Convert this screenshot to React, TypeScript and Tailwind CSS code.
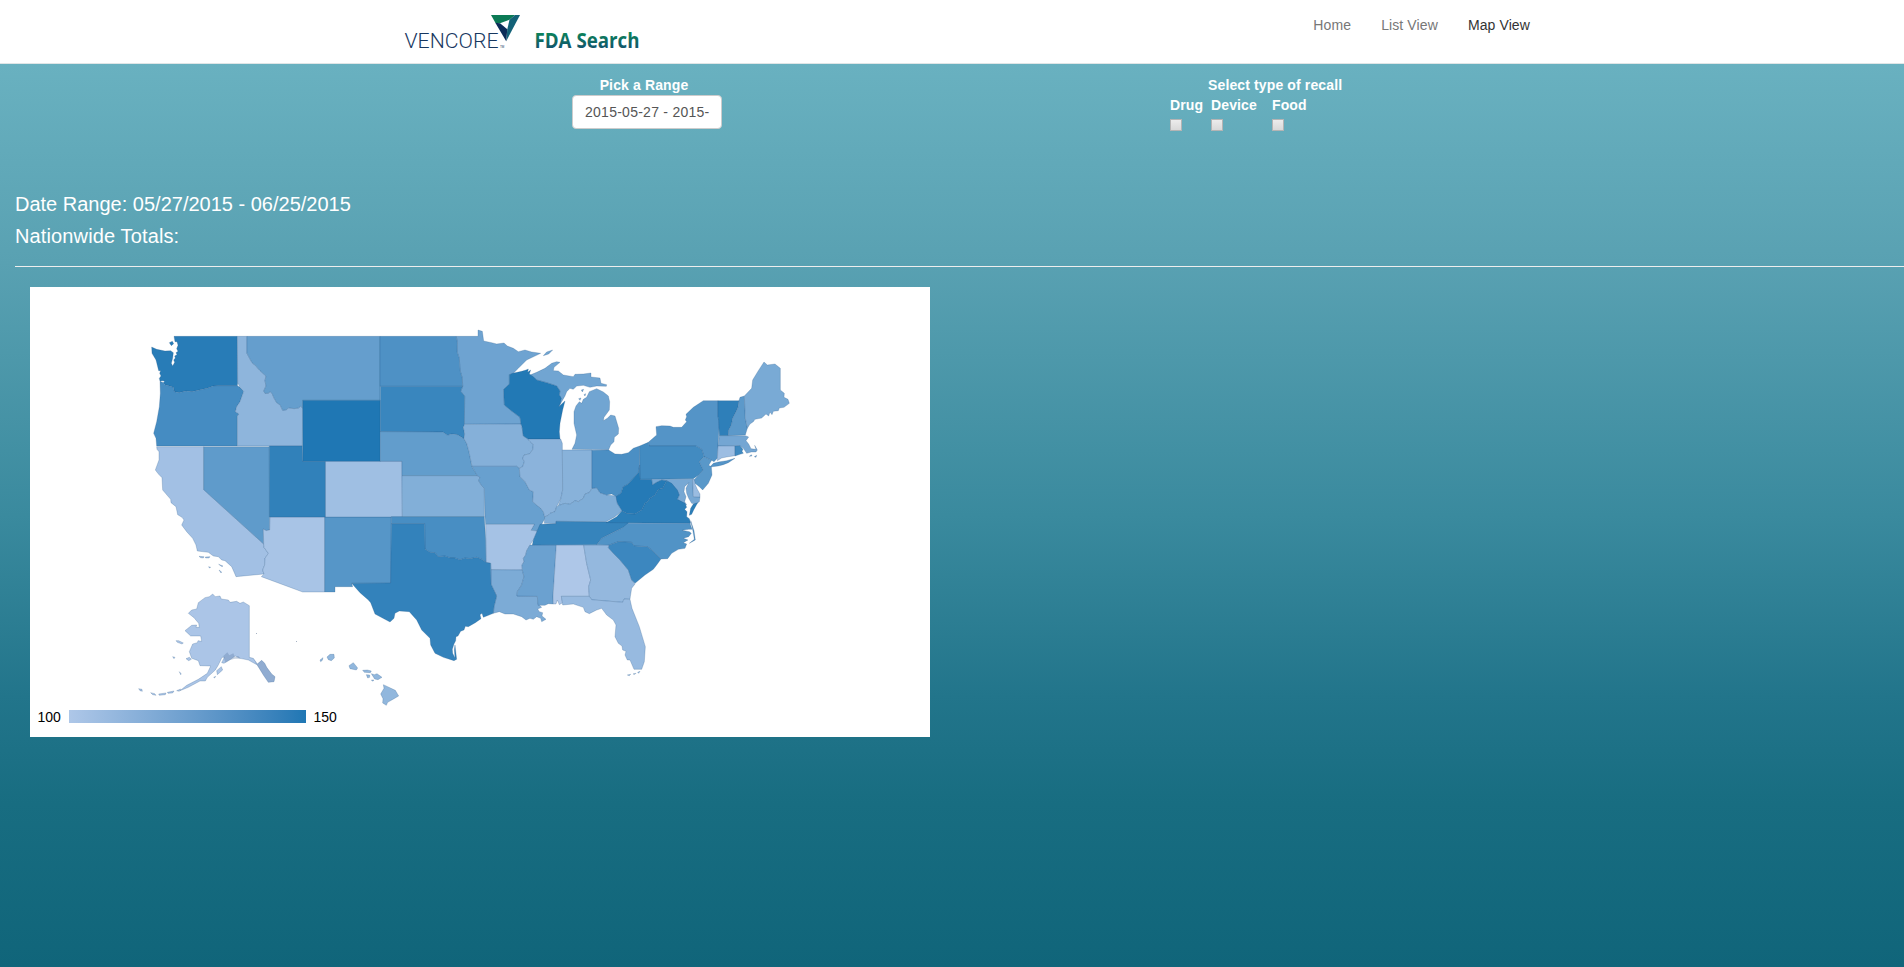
import React from 'react';

type Shape = { name: string; rank: number; d: string };

const LOW = [174, 199, 232];
const HIGH = [31, 119, 180];

function shade(rank: number): string {
  const t = rank / 49;
  const c = LOW.map((v, i) => Math.round(v + (HIGH[i] - v) * t));
  return `rgb(${c[0]},${c[1]},${c[2]})`;
}

const west: Shape[] = [
  { name: 'Washington', rank: 46, d: 'M132,79 322,79 323,218 322,227 265,227 250,228 232,235 208,240 186,245 168,243 148,248 133,245 130,232 118,228 105,224 100,218 104,213 96,212 90,214 88,205 93,198 89,190 92,182 86,182 78,150 66,130 65,111 80,118 105,123 122,122 130,128 128,145 124,160 128,168 134,157 131,150 136,144 134,138 141,134 138,128 144,124 140,116 144,106 141,95 135,95Z M118,98 127,94 131,101 124,107Z' },
  { name: 'Oregon', rank: 36, d: 'M90,214 100,218 105,224 118,228 130,232 133,245 148,248 168,243 186,245 208,240 232,235 250,228 265,227 322,227 330,232 341,244 330,275 320,290 316,305 327,312 322,318 322,408 80,408 78,385 71,370 80,335 88,290 91,250Z' },
  { name: 'Idaho', rank: 11, d: 'M322,79 351,79 351,130 366,158 376,166 390,182 408,198 405,212 408,228 401,243 405,250 414,250 421,245 427,252 432,264 440,278 450,284 458,301 470,299 476,293 492,296 505,294 512,289 518,294 517,408 322,408 322,318 327,312 316,305 320,290 330,275 341,244 330,232 323,218Z' },
  { name: 'Montana', rank: 25, d: 'M351,79 750,79 750,271 518,271 518,294 512,289 505,294 492,296 476,293 470,299 458,301 450,284 440,278 432,264 427,252 421,245 414,250 405,250 401,243 408,228 405,212 408,198 390,182 376,166 366,158 351,130Z' },
  { name: 'California', rank: 4, d: 'M80,410 221,410 221,539 401,702 402,712 415,730 405,745 404,765 398,780 402,792 318,800 313,788 305,770 285,752 275,750 265,740 250,738 235,727 202,723 198,705 188,685 170,665 155,645 162,630 156,622 143,614 138,590 123,578 122,568 98,540 96,503 86,493 76,480 87,450 87,425 81,418Z M207,739 222,740 220,744 212,743Z M226,741 240,740 237,744 227,744Z M236,770 242,772 238,774Z M266,763 279,768 276,770Z M267,780 275,786 273,789Z' },
  { name: 'Nevada', rank: 27, d: 'M221,410 418,410 419,660 408,662 400,657 401,702 221,539Z' },
  { name: 'Arizona', rank: 2, d: 'M420,621 584,621 584,846 518,846 394,800 402,792 398,780 404,765 405,745 415,730 402,712 401,702 400,657 408,662 419,660Z' },
  { name: 'New Mexico', rank: 30, d: 'M584,621 784,621 783,820 665,820 668,830 615,830 615,846 584,846Z' },
  { name: 'Colorado', rank: 5, d: 'M586,454 816,454 817,621 586,621Z' },
  { name: 'Utah', rank: 43, d: 'M418,408 517,408 518,454 586,454 586,621 418,621Z' },
  { name: 'Wyoming', rank: 49, d: 'M518,271 751,271 751,454 518,454Z' },
];

const central: Shape[] = [
  { name: 'Minnesota', rank: 22, d: 'M259,79 324,79 324,60 337,64 341,93 365,98 380,102 402,99 412,108 430,115 445,125 465,120 485,126 512,130 470,150 445,175 428,192 418,194 418,222 401,238 403,285 425,303 450,322 453,342 283,343 284,258 272,244 278,229 277,205 270,180 268,145 261,125 262,100Z' },
  { name: 'North Dakota', rank: 33, d: 'M30,79 259,79 262,100 261,125 268,145 270,180 277,205 278,229 30,229Z' },
  { name: 'South Dakota', rank: 40, d: 'M31,229 278,229 272,244 284,258 283,345 280,352 284,372 282,386 262,374 245,372 232,376 218,366 31,365Z' },
  { name: 'Nebraska', rank: 26, d: 'M31,365 218,366 232,376 245,372 262,374 282,386 290,400 297,425 302,450 306,470 315,485 322,497 96,497 96,454 31,454Z' },
  { name: 'Kansas', rank: 15, d: 'M96,497 322,497 330,502 326,512 335,527 343,535 343,620 97,620Z' },
  { name: 'Iowa', rank: 14, d: 'M283,343 453,342 458,360 460,378 474,387 480,395 490,403 488,420 478,432 462,435 458,445 463,455 458,470 448,475 440,469 306,469 302,450 297,425 290,400 282,386 284,372 280,352Z' },
  { name: 'Missouri', rank: 24, d: 'M306,469 440,469 448,475 450,500 465,515 478,540 490,545 488,575 512,595 520,605 525,625 517,640 510,650 502,663 483,661 493,643 347,643 345,620 343,535 335,527 326,512 330,502 322,497 315,485Z' },
  { name: 'Arkansas', rank: 3, d: 'M347,643 493,643 483,661 502,663 490,690 480,705 470,722 467,735 460,745 462,755 456,765 457,780 363,779 362,760 348,757Z' },
  { name: 'Louisiana', rank: 17, d: 'M363,779 457,780 462,800 455,825 442,845 441,858 502,859 504,882 515,892 503,897 508,905 518,908 516,918 528,928 515,935 512,925 500,920 490,928 480,925 468,930 455,920 430,912 405,912 388,905 370,910 372,890 380,858 363,822Z' },
  { name: 'Oklahoma', rank: 35, d: 'M64,620 343,620 347,690 348,757 335,748 320,742 300,746 285,744 270,750 255,744 240,744 225,738 205,740 195,728 180,727 165,717 164,641 64,641Z' },
  { name: 'Texas', rank: 42, d: 'M64,641 164,641 165,717 180,727 195,728 205,740 225,738 240,744 255,744 270,750 285,744 300,746 320,742 335,748 348,757 362,760 363,822 380,858 372,890 370,910 350,918 340,922 336,910 330,914 333,926 316,938 295,950 286,949 282,960 272,964 264,978 258,980 257,992 252,1002 247,1018 248,1030 255,1044 253,1020 255,1005 260,1048 252,1052 220,1042 195,1030 182,1005 180,985 155,960 140,930 118,905 88,903 75,910 72,925 60,936 15,912 2,878 -5,870 -30,848 -55,820 62,819Z' },
  { name: 'Mississippi', rank: 23, d: 'M487,705 559,705 549,860 550,882 535,881 525,886 504,886 502,859 441,858 442,845 455,825 462,800 457,780 456,765 462,755 460,745 467,735 470,722 480,705Z' },
  { name: 'Alabama', rank: 0, d: 'M559,705 641,705 650,760 662,810 656,830 658,859 574,859 578,878 568,884 562,870 558,882 550,882 549,860Z' },
  { name: 'Georgia', rank: 9, d: 'M641,705 718,705 715,713 730,730 750,750 775,780 785,810 795,822 785,835 781,860 780,868 762,867 758,877 665,870 658,859 656,830 662,810 650,760Z' },
  { name: 'Florida', rank: 8, d: 'M574,859 658,859 665,869 758,877 762,867 780,868 786,895 808,950 826,1010 823,1055 815,1078 792,1078 780,1050 772,1050 765,1035 768,1024 758,1020 756,1008 745,1000 735,980 738,945 730,930 710,915 695,895 680,900 658,911 645,905 640,892 610,882 578,885Z M772,1095 782,1093 778,1097Z M789,1092 798,1090 795,1093Z M803,1087 810,1084 806,1090Z' },
  { name: 'Michigan', rank: 21, d: 'M478,196 500,187 525,175 545,160 560,155 570,157 552,172 550,182 565,183 580,195 610,200 615,193 640,192 663,189 663,201 690,204 693,220 710,224 709,229 680,228 660,232 640,226 620,228 610,238 600,235 590,245 585,258 568,287 572,265 568,255 570,243 560,228 530,218 500,210Z M606,418 615,400 620,375 612,340 612,305 618,288 628,275 635,280 640,268 650,262 658,245 680,236 700,246 715,258 719,275 718,300 702,322 700,332 712,325 722,315 735,318 746,355 745,372 733,382 732,395 722,405 716,419Z M520,137 530,126 548,120 536,132Z M634,240 641,238 637,246Z M626,266 633,264 630,271Z M642,254 647,251 645,258Z' },
  { name: 'Wisconsin', rank: 48, d: 'M418,194 428,190 455,184 468,180 475,177 473,187 482,180 478,192 490,200 500,210 530,218 560,228 570,243 568,255 574,265 570,283 566,290 585,273 578,300 570,340 568,365 570,387 474,387 460,378 456,350 453,342 450,322 425,303 403,285 401,238 418,222Z' },
  { name: 'Illinois', rank: 12, d: 'M474,387 572,387 577,400 578,540 573,565 560,590 555,605 540,610 532,618 524,620 520,605 512,595 488,575 490,545 478,540 465,515 450,500 448,475 458,470 463,455 458,445 462,435 478,432 488,420 490,403 480,395Z' },
  { name: 'Indiana', rank: 13, d: 'M577,420 666,420 666,535 658,548 645,552 640,565 625,575 615,572 600,583 585,580 565,587 573,565 578,540Z' },
  { name: 'Kentucky', rank: 16, d: 'M523,640 524,620 532,618 540,610 555,605 560,590 565,587 585,580 600,583 615,572 625,575 640,565 645,552 658,548 666,535 680,533 690,548 710,555 740,558 742,580 756,602 735,620 708,635 558,634 558,641Z' },
  { name: 'Tennessee', rank: 41, d: 'M510,643 558,641 558,634 775,637 773,644 755,655 720,672 695,685 680,704 487,705 490,690Z' },
];

const east: Shape[] = [
  { name: 'Ohio', rank: 34, d: 'M96,391 146,390 165,402 185,403 205,398 220,385 239,378 239,435 235,458 215,480 205,492 190,500 183,520 170,530 155,522 140,525 120,518 110,503 96,505Z' },
  { name: 'New York', rank: 31, d: 'M265,367 290,345 288,320 305,317 330,318 340,322 365,322 380,305 376,300 380,290 378,283 400,262 430,242 474,242 474,290 478,300 476,347 474,378 472,415 462,425 455,421 432,410 425,388 408,378 267,378Z M450,441 460,430 475,426 500,422 525,415 505,428 490,434 475,438Z' },
  { name: 'Pennsylvania', rank: 37, d: 'M239,378 265,367 267,378 408,378 425,388 432,410 418,425 425,440 430,450 415,466 400,476 240,478Z' },
  { name: 'New Jersey', rank: 29, d: 'M432,410 455,421 446,436 454,440 456,465 445,490 428,510 418,500 405,490 402,480 415,466 430,450 425,440 418,425Z' },
  { name: 'Vermont', rank: 44, d: 'M474,242 537,242 534,262 528,275 518,295 514,315 506,330 505,347 478,347 476,300 474,290Z' },
  { name: 'New Hampshire', rank: 28, d: 'M537,242 540,232 553,228 556,295 562,325 556,345 505,347 506,330 514,315 518,295 528,275 534,262Z' },
  { name: 'Maine', rank: 18, d: 'M553,228 575,205 578,180 595,152 612,126 622,135 645,132 661,145 661,210 673,220 672,232 684,238 688,250 672,262 658,264 655,272 640,274 636,284 630,276 626,288 618,282 605,294 585,298 580,305 570,312 562,325 556,295Z' },
  { name: 'Massachusetts', rank: 20, d: 'M478,347 556,347 566,351 558,362 566,372 573,386 588,388 584,376 592,390 588,396 574,396 560,400 550,385 540,377 474,378Z M568,409 574,404 576,408Z M583,410 590,406 588,412Z' },
  { name: 'Connecticut', rank: 6, d: 'M474,378 525,378 525,407 500,411 485,414 472,422Z' },
  { name: 'Rhode Island', rank: 38, d: 'M525,378 540,377 549,388 546,394 550,400 540,403 525,408Z' },
  { name: 'Maryland', rank: 19, d: 'M275,478 398,478 400,530 420,531 418,545 408,552 395,550 386,535 380,520 378,505 386,488 374,500 372,515 378,530 374,545 380,555 368,552 352,538 358,525 350,512 340,498 320,482 305,480 290,487 277,495Z' },
  { name: 'Delaware', rank: 7, d: 'M398,478 403,478 405,492 412,508 420,522 420,531 400,530Z' },
  { name: 'Virginia', rank: 45, d: 'M138,608 170,590 186,572 200,580 225,582 245,570 255,550 262,545 270,535 285,525 295,508 308,505 320,482 335,490 352,510 358,525 352,538 375,550 380,562 374,568 381,575 380,590 388,596 392,610Z M388,586 392,565 400,552 413,548 401,570 395,583Z' },
  { name: 'West Virginia', rank: 47, d: 'M239,435 240,478 275,478 277,495 290,487 305,480 320,482 308,505 295,508 285,525 270,535 262,545 255,550 245,570 225,582 200,580 186,572 172,550 168,530 183,520 190,500 205,492 215,480 235,458Z' },
  { name: 'North Carolina', rank: 32, d: 'M203,610 390,610 396,628 386,628 366,631 388,635 394,640 386,650 370,655 384,660 370,668 380,672 375,685 355,688 335,700 323,716 303,717 275,690 262,680 223,678 215,667 175,665 148,675 110,674 125,655 150,642 185,625Z M392,602 402,632 406,660 388,670 403,658 399,634Z' },
  { name: 'South Carolina', rank: 39, d: 'M148,675 175,665 215,667 223,678 262,680 275,690 303,717 290,735 280,748 255,765 225,790 215,780 205,750 180,720 160,700 145,683Z' },
];

const offshore: Shape[] = [
  { name: 'Alaska', rank: 1, d: 'M388,107 388,262 400,265 412,282 425,271 434,280 440,292 455,312 465,320 462,335 445,337 430,315 412,285 385,270 360,265 345,258 332,268 312,280 305,278 313,262 306,262 295,285 286,300 262,322 256,333 240,333 205,352 180,362 200,346 235,328 262,310 272,288 240,287 235,272 215,265 208,245 218,222 232,218 234,212 245,214 242,198 212,198 195,182 215,166 230,165 228,172 238,172 236,160 222,143 205,130 215,120 230,117 235,98 255,83 268,80 278,72 286,80 300,78 304,87 325,90 330,97 350,94 360,100 370,96Z M290,302 304,290 308,300 292,314Z M168,212 176,212 190,219 186,222 172,217Z M198,266 208,262 214,268 206,272Z M158,260 165,262 162,266Z M178,305 184,312 182,314Z M56,356 66,358 67,364 60,362Z M92,368 104,371 108,376 98,374Z M116,372 138,369 136,374 118,376Z M142,367 162,363 158,369 144,370Z M170,362 182,357 178,364Z M281,322 287,319 284,324Z' },
  { name: 'Hawaii', rank: 10, d: 'M600,270 609,263 607,271 602,275Z M621,261 630,253 642,253 643,264 634,272 625,269Z M687,287 700,278 713,294 709,300 690,296Z M728,301 742,300 754,303 751,308 733,307Z M739,314 749,315 749,322 743,324Z M754,311 763,314 771,311 786,322 774,329 764,327Z M754,330 762,330 758,334Z M790,344 803,350 826,361 836,378 817,389 803,397 799,406 788,399 789,386 782,372 792,355Z' },
];

const groups: { id: string; transform: string; shapes: Shape[] }[] = [
  { id: 'west', transform: 'translate(100 23) scale(0.33333)', shapes: west },
  { id: 'central', transform: 'translate(340 23) scale(0.33333)', shapes: central },
  { id: 'east', transform: 'translate(530 33) scale(0.33333)', shapes: east },
  { id: 'offshore', transform: 'translate(90 283) scale(0.33333)', shapes: offshore },
];

function UsMap() {
  return (
    <svg className="block h-[423px] w-[900px]" viewBox="0 0 900 423" role="img" aria-label="United States">
      {groups.map((g) => (
        <g key={g.id} transform={g.transform} stroke="#1f4f80" strokeOpacity={0.27} strokeWidth={2.5} strokeLinejoin="round">
          {g.shapes.map((s) => (
            <path key={s.name} d={s.d} fill={shade(s.rank)} />
          ))}
        </g>
      ))}
      <path
        transform="translate(90 283) scale(0.33333)"
        d="M400,266 412,282 425,271 434,280 440,292 455,312 465,320 462,335 445,337 430,315 412,287ZM310,258 322,247 328,256 340,250 345,262 355,258 362,266 345,266 330,270 316,278Z"
        fill="#5f7da8"
        fillOpacity={0.35}
      />
      <circle cx="226.5" cy="346.5" r="0.5" fill="#8a9bb0" />
      <circle cx="266.5" cy="354.5" r="0.5" fill="#8a9bb0" />
    </svg>
  );
}

function Logo() {
  return (
    <svg className="h-[63px] w-[260px]" viewBox="390 0 260 63" role="img" aria-label="Vencore FDA Search">
      <defs>
        <linearGradient id="title" x1="0" y1="0" x2="0" y2="1">
          <stop offset="0.2" stopColor="#0b8a58" />
          <stop offset="0.85" stopColor="#12506e" />
        </linearGradient>
      </defs>
      <path d="M491,15H515L509.500,19.700L500,23.300L495.500,23Z" fill="#0b7a55" />
      <path d="M515,15H520L506.200,41.200L507.300,29.300L509.500,19.700Z" fill="#136278" />
      <path d="M495.300,22.700L500,23.300L507.300,29.300L506.200,41.200Z" fill="#0b2c58" />
      <text x="404.5" y="47.5" textLength="94" lengthAdjust="spacingAndGlyphs" fontFamily="Roboto, 'Liberation Sans', sans-serif" fontWeight="300" fontSize="19.5" fill="#17375f">
        VENCORE
      </text>
      <text x="500" y="47.5" fontFamily="'Liberation Sans', sans-serif" fontSize="3" fill="#17375f">TM</text>
      <text x="534.500" y="47.800" textLength="105" lengthAdjust="spacingAndGlyphs" fontFamily="'Open Sans', 'Noto Sans', sans-serif" fontWeight="700" fontSize="21.5" fill="url(#title)">
        FDA Search
      </text>
    </svg>
  );
}

function RecallOption({ label, className }: { label: string; className: string }) {
  return (
    <label className={`flex flex-col items-start ${className}`}>
      <span className="h-5">{label}</span>
      <span className="mt-1 size-[12px] border border-[#b4b4b4] bg-linear-to-b from-[#ececec] to-[#d9d9d9]" />
    </label>
  );
}

export default function App() {
  return (
    <div className="flex h-[967px] w-full flex-col overflow-hidden bg-white font-['Liberation_Sans',Arial,sans-serif] text-sm leading-5">
      <header className="flex h-16 shrink-0 items-start border-b border-[#dfe5e6] pr-[374px] pl-[390px]">
        <Logo />
        <nav className="ml-auto flex gap-[30px] pt-[15px] tracking-[0.11px] text-[#777]">
          <a href="#home">Home</a>
          <a href="#list">List View</a>
          <a href="#map" className="text-[#333]">Map View</a>
        </nav>
      </header>
      <main className="flex flex-1 flex-col bg-[linear-gradient(to_bottom,#69b1c0_0%,#59a1b2_22%,#3a8a9e_50%,#22758b_70%,#186d81_82%,#10657a_100%)] text-white">
        <section className="flex h-[112px] shrink-0 pt-[11px] font-bold tracking-[0.13px]">
          <div className="ml-[572px] flex w-[150px] flex-col items-center">
            <span className="-translate-x-[3px]">Pick a Range</span>
            <div className="h-[34px] w-[150px] rounded border border-[#ccc] bg-white px-3 py-1.5 font-normal tracking-[0.26px] whitespace-nowrap text-[#555]">
              2015-05-27 - 2015-
            </div>
          </div>
          <div className="ml-[448px] flex flex-col">
            <span className="ml-[38px]">Select type of recall</span>
            <div className="flex">
              <RecallOption label="Drug" className="w-[41px]" />
              <RecallOption label="Device" className="w-[61px]" />
              <RecallOption label="Food" className="w-[50px]" />
            </div>
          </div>
        </section>
        <section className="ml-[15px] flex h-[91px] shrink-0 flex-col border-b border-[#eee] pt-3 text-xl leading-8">
          <p>Date Range: 05/27/2015 - 06/25/2015</p>
          <p className="tracking-[0.13px]">Nationwide Totals:</p>
        </section>
        <section className="mt-5 ml-[30px] h-[450px] w-[900px] bg-white text-black">
          <UsMap />
          <div className="flex h-[13px] items-center pl-[7.500px]">
            <span className="w-[31px]">100</span>
            <span className="h-[13px] w-[237px] bg-linear-to-r from-[#aec7e8] to-[#1f77b4]" />
            <span className="ml-2">150</span>
          </div>
        </section>
      </main>
    </div>
  );
}
